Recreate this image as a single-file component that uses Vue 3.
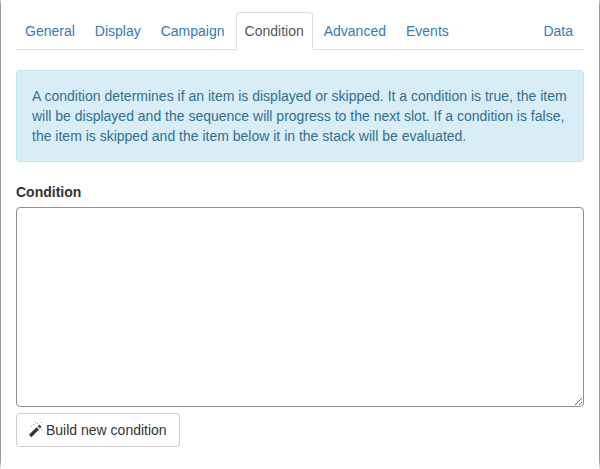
<script setup>
const tabs = ['General', 'Display', 'Campaign', 'Condition', 'Advanced', 'Events']
</script>

<template>
  <div class="page">
    <ul class="tabs">
      <li v-for="t in tabs" :key="t" class="tab" :class="{ active: t === 'Condition' }">{{ t }}</li>
      <li class="tab right">Data</li>
    </ul>
    <div class="alert">
      A condition determines if an item is displayed or skipped. It a condition is true, the item will be displayed and the sequence will progress to the next slot. If a condition is false, the item is skipped and the item below it in the stack will be evaluated.
    </div>
    <label class="label" for="cond">Condition</label>
    <textarea id="cond" class="area"></textarea>
    <button class="btn" type="button">
      <svg class="wand" width="14" height="16" viewBox="0 0 14 16" aria-hidden="true">
        <path d="M0 12.8 7.6 5.2 10 7.6 2.4 15.2z" fill="#333" />
        <path d="M8.5 4.3 10.4 2.4l2.4 2.4-1.9 1.9z" fill="#555" />
        <path d="M4 2h1v1H4zM6 0h1v1H6zM2 4h1v1H2zM8 1h1v1H8zM12.5 7h1v1h-1zM12 0h1v1h-1z" fill="#999" />
      </svg>
      Build new condition
    </button>
  </div>
</template>

<style scoped>
.page {
  box-sizing: border-box;
  width: 600px;
  height: 469px;
  padding: 12px 15px 0;
  border-style: solid;
  border-width: 0 1px;
  border-image: linear-gradient(to bottom, #ddd 0, #999 6px, #999 460px, #fff 469px) 1;
  font-family: "Liberation Sans", Arial, sans-serif;
  font-size: 14px;
  line-height: 20px;
  color: #333;
  background: #fff;
  display: flex;
  flex-direction: column;
  align-items: flex-start;
}
.tabs {
  list-style: none;
  margin: 0;
  padding: 0;
  display: flex;
  gap: 2px;
  width: 100%;
  height: 38px;
  box-sizing: border-box;
  border-bottom: 1px solid #ddd;
}
.tab {
  box-sizing: border-box;
  height: 38px;
  padding: 8px 8px;
  border: 1px solid transparent;
  border-radius: 4px 4px 0 0;
  color: #337ab7;
}
.tab.active {
  color: #555;
  background: #fff;
  border-color: #ddd #ddd #fff;
}
.tab.right {
  margin-left: auto;
  margin-right: 2px;
}
.alert {
  box-sizing: border-box;
  width: 100%;
  margin-top: 20px;
  padding: 15px;
  background: #d9edf7;
  border: 1px solid #bce8f1;
  border-radius: 4px;
  color: #31708f;
}
.label {
  margin-top: 20px;
  font-weight: 700;
  margin-bottom: 5px;
}
.area {
  display: block;
  box-sizing: border-box;
  width: 100%;
  height: 200px;
  margin: 0;
  padding: 6px 12px;
  border: 1px solid #8f8f8f;
  border-radius: 4px;
  background: #fff;
  font: inherit;
  outline: none;
}
.btn {
  box-sizing: border-box;
  display: inline-flex;
  align-items: center;
  gap: 3px;
  height: 34px;
  margin-top: 6px;
  padding: 6px 12px;
  border: 1px solid #ccc;
  border-radius: 4px;
  background: #fff;
  color: #333;
  font: inherit;
}
.wand {
  flex: none;
}
</style>

<style>
html, body {
  margin: 0;
  background: #fff;
}
</style>
